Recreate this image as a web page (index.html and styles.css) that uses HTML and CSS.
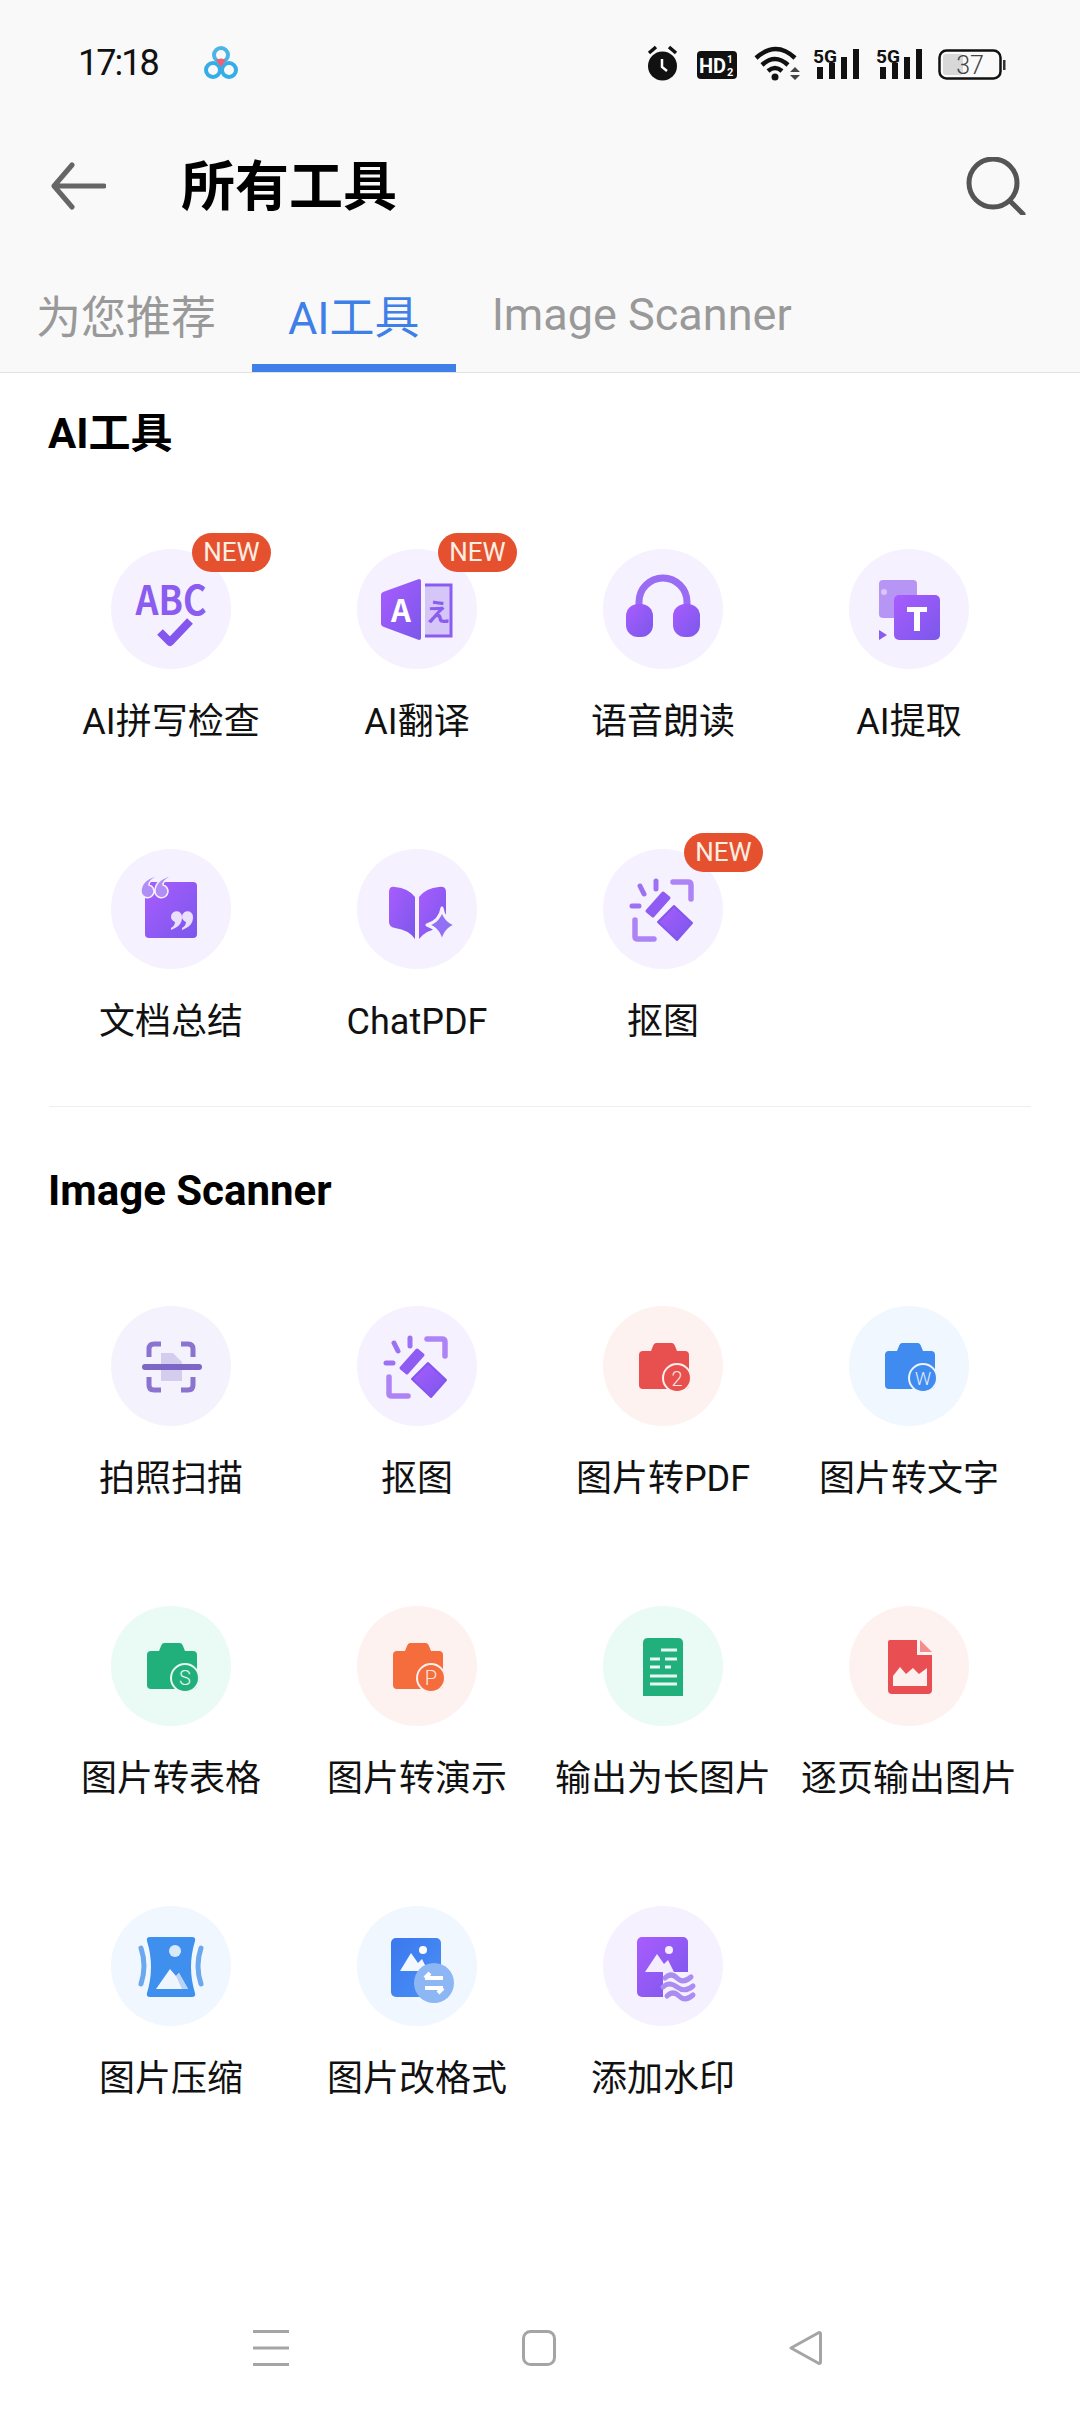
FILE: index.html
```html
<!DOCTYPE html>
<html lang="zh-CN">
<head>
  <meta charset="UTF-8" />
  <meta name="viewport" content="width=device-width, initial-scale=1.0" />
  <title>所有工具</title>
  <link rel="stylesheet" href="styles.css">
</head>
<body>
  <!-- shared gradients and repeated icons -->
  <svg class="sprite" aria-hidden="true">
    <defs>
      <linearGradient id="pu" x1="0" y1="0" x2="1" y2="1"><stop offset="0" stop-color="#a95cff"/><stop offset="1" stop-color="#7a58ea"/></linearGradient>
      <linearGradient id="bl" x1="0" y1="0" x2="1" y2="1"><stop offset="0" stop-color="#3b78ee"/><stop offset="1" stop-color="#4a90f6"/></linearGradient>
      <symbol id="eraser" viewBox="0 0 120 120">
        <path d="M70 33h15q3 0 3 3v14M32 71v17q0 2 3 2h16" fill="none" stroke="#ad84f5" stroke-width="5.500" stroke-linecap="round"/>
        <path d="M37 37l4 8M53 32v8M29 57h7" fill="none" stroke="#9c72f3" stroke-width="5" stroke-linecap="round"/>
        <path d="M60 44l6 5-16 18-6-5z" fill="#8e5cf2" stroke="#8e5cf2" stroke-width="3" stroke-linejoin="round"/>
        <path d="M71 57l18 17-15 17-19-18z" fill="url(#pu)" stroke="#8356ee" stroke-width="2" stroke-linejoin="round"/>
      </symbol>
      <symbol id="camera" viewBox="0 0 120 120">
        <path d="M53 37h16q2 0 3 3l2 5h8q4 0 4 4v30q0 4-4 4H40q-4 0-4-4V49q0-4 4-4h8l2-5q1-3 3-3z" fill="currentColor"/>
      </symbol>
    </defs>
  </svg>

  <header class="top">
    <div class="status">
      <div class="status-left">
        <span class="time">17:18</span>
        <svg class="app-logo" width="38" height="36" viewBox="0 0 38 36">
          <circle cx="11" cy="25" r="7" fill="none" stroke="#35ade6" stroke-width="4"/>
          <circle cx="27" cy="25" r="7" fill="none" stroke="#35ade6" stroke-width="4"/>
          <circle cx="19" cy="10" r="7" fill="none" stroke="#4cb5e6" stroke-width="4"/>
          <path d="M14 15l5 7 5-7q-5-3-10 0z" fill="#ee5f78"/>
        </svg>
      </div>
      <svg class="status-icons" width="370" height="40" viewBox="640 43 370 40">
        <circle cx="662.5" cy="66" r="14.5" fill="#111"/>
        <path d="M649 53l7-6M676 53l-7-6" stroke="#111" stroke-width="3.5"/>
        <path d="M662 59v8l5 4" fill="none" stroke="#fff" stroke-width="2.5"/>
        <rect x="697" y="51" width="40" height="28" rx="4" fill="#111"/>
        <text class="st-bold" x="699" y="73" font-size="20" fill="#fff">HD</text>
        <text class="st-bold" x="727" y="63" font-size="10" fill="#fff">1</text>
        <text class="st-bold" x="727" y="76" font-size="11" fill="#fff">2</text>
        <path d="M756 58q20-18 39 0M762 65q13-12 26 0M768 71q7-6 14 0" fill="none" stroke="#111" stroke-width="4.5"/>
        <circle cx="775" cy="77" r="3.5" fill="#111"/>
        <path d="M795 67l5 5h-10zM795 80l-5-5h10z" fill="#444"/>
        <g id="sig">
          <text class="st-bold" x="813" y="63" font-size="19" fill="#111" textLength="24" lengthAdjust="spacingAndGlyphs">5G</text>
          <rect x="817" y="67" width="6" height="12" fill="#111"/>
          <rect x="829" y="63" width="6" height="16" fill="#111"/>
          <rect x="841" y="57" width="6" height="22" fill="#111"/>
          <rect x="853" y="49" width="6" height="30" fill="#111"/>
        </g>
        <use href="#sig" x="63"/>
        <rect x="939.5" y="50.5" width="61" height="28" rx="7" fill="none" stroke="#111" stroke-width="2.5"/>
        <rect x="943" y="54" width="20" height="21" rx="3" fill="#d8d8d8"/>
        <text class="st-light" x="970" y="74" font-size="25" fill="#444" text-anchor="middle">37</text>
        <rect x="1003" y="60" width="2.5" height="10" fill="#333"/>
      </svg>
    </div>

    <div class="toolbar">
      <div class="toolbar-left">
        <svg width="56" height="48" viewBox="0 0 56 48"><path d="M22 3L4 24l18 21M4 24h50" fill="none" stroke="#666" stroke-width="5" stroke-linecap="round" stroke-linejoin="round"/></svg>
        <h1>所有工具</h1>
      </div>
      <svg width="60" height="58" viewBox="0 0 60 58"><circle cx="27" cy="26" r="24" fill="none" stroke="#555" stroke-width="5"/><path d="M44 44l13 13" stroke="#555" stroke-width="5" stroke-linecap="round"/></svg>
    </div>

    <nav class="tabs">
      <a class="tab">为您推荐</a>
      <a class="tab active">AI工具</a>
      <a class="tab">Image Scanner</a>
    </nav>
  </header>

  <main class="content">
    <section class="group">
      <h2>AI工具</h2>
      <div class="tool-grid">
        <div class="tool">
          <div class="icon purple">
            <span class="new">NEW</span>
            <svg viewBox="0 0 120 120">
              <text class="glyph" x="60" y="66" font-size="40" text-anchor="middle" fill="#8a5cf0" textLength="71" lengthAdjust="spacingAndGlyphs">ABC</text>
              <path d="M49 83l10 10 20-21" fill="none" stroke="#8356ee" stroke-width="8" stroke-linejoin="round"/>
            </svg>
          </div>
          <span class="label">AI拼写检查</span>
        </div>
        <div class="tool">
          <div class="icon purple">
            <span class="new">NEW</span>
            <svg viewBox="0 0 120 120">
              <path d="M68 36h26v51H68" fill="#d6c6f8" stroke="#8a5cf0" stroke-width="3"/>
              <path d="M24 46q0-2 2-3l36-13q2 0 2 2v57q0 2-2 2L27 78q-3-1-3-3z" fill="url(#pu)"/>
              <text class="glyph" x="44" y="73" font-size="31" text-anchor="middle" fill="#fff">A</text>
              <text class="glyph" x="81" y="72" font-size="25" text-anchor="middle" fill="#8a5cf0">え</text>
            </svg>
          </div>
          <span class="label">AI翻译</span>
        </div>
        <div class="tool">
          <div class="icon purple">
            <svg viewBox="0 0 120 120">
              <path d="M36 62V53a24 24 0 0 1 48 0v9" fill="none" stroke="#9a6cf3" stroke-width="7"/>
              <rect x="23" y="55" width="27" height="33" rx="12" fill="url(#pu)"/>
              <rect x="70" y="55" width="27" height="33" rx="12" fill="url(#pu)"/>
            </svg>
          </div>
          <span class="label">语音朗读</span>
        </div>
        <div class="tool">
          <div class="icon purple">
            <svg viewBox="0 0 120 120">
              <rect x="30" y="31" width="38" height="38" rx="4" fill="#b795f5"/>
              <circle cx="35" cy="43" r="3" fill="#d8c8fa"/>
              <path d="M30 81l8 5-8 5z" fill="#8a5cf0"/>
              <rect x="45" y="46" width="46" height="45" rx="5" fill="url(#pu)"/>
              <path d="M58 58h20v5h-7v19h-6V63h-7z" fill="#fff"/>
            </svg>
          </div>
          <span class="label">AI提取</span>
        </div>
        <div class="tool">
          <div class="icon purple">
            <svg viewBox="0 0 120 120">
              <rect x="34" y="33" width="52" height="56" rx="4" fill="url(#pu)"/>
              <path d="M44 27C35 30 30 35 30 42A6.500 6.500 0 1 0 38 36C38 33 41 30 44 29zM58 27C49 30 44 35 44 42A6.500 6.500 0 1 0 52 36C52 33 55 30 58 29z" fill="#b18df6" stroke="#f6f1fe" stroke-width="1.500"/>
              <path d="M60 81C68 78 71 74 71 68A5.500 5.500 0 1 0 64 73C64 76 62 78 60 79zM71 81C79 78 82 74 82 68A5.500 5.500 0 1 0 75 73C75 76 73 78 71 79z" fill="#eadffd"/>
            </svg>
          </div>
          <span class="label">文档总结</span>
        </div>
        <div class="tool">
          <div class="icon purple">
            <svg viewBox="0 0 120 120">
              <path d="M32 43q0-6 6-5 13 1 20 10v42q-6-9-20-11-6-1-6-6z" fill="url(#pu)"/>
              <path d="M62 48q7-9 20-10 7-1 7 5v32q0 3-6 4-14 2-21 11z" fill="url(#pu)"/>
              <path d="M85 59q2 13 15 17-13 4-15 19-2-15-15-19 13-4 15-17z" fill="#9270f4" stroke="#f6f1fe" stroke-width="3" stroke-linejoin="round"/>
            </svg>
          </div>
          <span class="label">ChatPDF</span>
        </div>
        <div class="tool">
          <div class="icon purple">
            <span class="new">NEW</span>
            <svg viewBox="0 0 120 120"><use href="#eraser"/></svg>
          </div>
          <span class="label">抠图</span>
        </div>
      </div>
    </section>

    <hr class="divider">

    <section class="group">
      <h2>Image Scanner</h2>
      <div class="tool-grid">
        <div class="tool">
          <div class="icon lilac">
            <svg viewBox="0 0 120 120">
              <path d="M50 47l12 0 9 9v19H50z" fill="#d5cdee"/>
              <path d="M50 38H43q-5 0-5 5v8M70 38h7q5 0 5 5v8M38 71v8q0 5 5 5h7M82 71v8q0 5-5 5h-7" fill="none" stroke="#8a74d0" stroke-width="5"/>
              <path d="M34 61h54" stroke="#7d67c6" stroke-width="6" stroke-linecap="round"/>
            </svg>
          </div>
          <span class="label">拍照扫描</span>
        </div>
        <div class="tool">
          <div class="icon purple">
            <svg viewBox="0 0 120 120"><use href="#eraser"/></svg>
          </div>
          <span class="label">抠图</span>
        </div>
        <div class="tool">
          <div class="icon red">
            <svg viewBox="0 0 120 120" class="cam-red">
              <use href="#camera"/>
              <circle cx="74" cy="72" r="14" fill="#e8504f" stroke="#fdf0ee" stroke-width="2"/>
              <text class="glyph-thin" x="74" y="80" font-size="20" text-anchor="middle" fill="#fde3df">2</text>
            </svg>
          </div>
          <span class="label">图片转PDF</span>
        </div>
        <div class="tool">
          <div class="icon blue">
            <svg viewBox="0 0 120 120" class="cam-blue">
              <use href="#camera"/>
              <circle cx="74" cy="72" r="14" fill="#3f8bef" stroke="#eef5fd" stroke-width="2"/>
              <text class="glyph-thin" x="74" y="79" font-size="18" text-anchor="middle" fill="#e6f0fd">W</text>
            </svg>
          </div>
          <span class="label">图片转文字</span>
        </div>
        <div class="tool">
          <div class="icon green">
            <svg viewBox="0 0 120 120" class="cam-green">
              <use href="#camera"/>
              <circle cx="74" cy="72" r="14" fill="#21b07c" stroke="#e8f8f2" stroke-width="2"/>
              <text class="glyph-thin" x="74" y="79" font-size="20" text-anchor="middle" fill="#e6f8f0">S</text>
            </svg>
          </div>
          <span class="label">图片转表格</span>
        </div>
        <div class="tool">
          <div class="icon red">
            <svg viewBox="0 0 120 120" class="cam-orange">
              <use href="#camera"/>
              <circle cx="74" cy="72" r="14" fill="#f56c3d" stroke="#fdf0ee" stroke-width="2"/>
              <text class="glyph-thin" x="74" y="79" font-size="20" text-anchor="middle" fill="#fde8df">P</text>
            </svg>
          </div>
          <span class="label">图片转演示</span>
        </div>
        <div class="tool">
          <div class="icon green">
            <svg viewBox="0 0 120 120">
              <path d="M45 32h30q5 0 5 5v53H40V37q0-5 5-5z" fill="#21b07c"/>
              <path d="M58 44h16M47 53h10M62 53h12M47 61h10M62 61h6M47 70h27M47 78h27" stroke="#e8f8f2" stroke-width="3"/>
            </svg>
          </div>
          <span class="label">输出为长图片</span>
        </div>
        <div class="tool">
          <div class="icon red">
            <svg viewBox="0 0 120 120">
              <path d="M41 34h27v15h15v35q0 4-4 4H43q-4 0-4-4V36q0-2 2-2z" fill="#e94f52"/>
              <path d="M71 34l12 12H71z" fill="#f48d8d"/>
              <path d="M44 80V70l7-9 6 7 7-6 6 6 8-6v18z" fill="#fdf0ee"/>
            </svg>
          </div>
          <span class="label">逐页输出图片</span>
        </div>
        <div class="tool">
          <div class="icon blue">
            <svg viewBox="0 0 120 120">
              <path d="M39 31h42q4 0 3 4-8 26 0 52 1 4-3 4H39q-4 0-3-4 8-26 0-52-1-4 3-4z" fill="#3f8fef"/>
              <circle cx="64" cy="45" r="6" fill="#d8e9fc"/>
              <path d="M45 83l14-20 6 7 3-3 9 16z" fill="#eef5fd"/>
              <path d="M65 70l3-3 9 16h-6z" fill="#b9d3f6"/>
              <path d="M30 42q6 18 0 36M90 42q-6 18 0 36" fill="none" stroke="#6ba8ee" stroke-width="5" stroke-linecap="round"/>
            </svg>
          </div>
          <span class="label">图片压缩</span>
        </div>
        <div class="tool">
          <div class="icon blue">
            <svg viewBox="0 0 120 120">
              <rect x="34" y="32" width="50" height="59" rx="5" fill="url(#bl)"/>
              <circle cx="66" cy="44" r="4" fill="#fff"/>
              <path d="M43 65l11-18 7 10 4-4 6 12z" fill="#f3f7fe"/>
              <circle cx="77" cy="77" r="20" fill="#8db6f5"/>
              <path d="M68 72h18M68 72l5-5M86 82H68M86 82l-5 5" fill="none" stroke="#fff" stroke-width="4"/>
            </svg>
          </div>
          <span class="label">图片改格式</span>
        </div>
        <div class="tool">
          <div class="icon purple">
            <svg viewBox="0 0 120 120">
              <rect x="34" y="31" width="51" height="60" rx="5" fill="url(#pu)"/>
              <circle cx="66" cy="44" r="4" fill="#f3edff"/>
              <path d="M42 66l12-18 7 10 4-4 6 12z" fill="#f3edff"/>
              <path d="M60 66h33v28H60z" fill="#f6f1fe"/>
              <path d="M62 72q6-6 12 0t14-1M60 81q6-6 14 0t16-1M64 90q6-6 12 0t14-1" fill="none" stroke="#ab8cf2" stroke-width="5" stroke-linecap="round"/>
            </svg>
          </div>
          <span class="label">添加水印</span>
        </div>
      </div>
    </section>
  </main>

  <footer class="navbar">
    <svg width="36" height="36" viewBox="0 0 36 36"><path d="M0 1.500h36M0 18h36M0 34.500h36" stroke="#a5a5a5" stroke-width="3"/></svg>
    <svg width="34" height="36" viewBox="0 0 34 36"><rect x="1.500" y="1.500" width="31" height="33" rx="7" fill="none" stroke="#a5a5a5" stroke-width="3"/></svg>
    <svg width="34" height="36" viewBox="0 0 34 36"><path d="M31 2.500L3 18l28 15.500q1.500 0 1.500-1.500V4q0-1.500-1.500-1.500z" fill="none" stroke="#a5a5a5" stroke-width="3" stroke-linejoin="round"/></svg>
  </footer>
</body>
</html>
```

FILE: styles.css
```css
:root {
  --head-bg: #f9f9f9;
  --line: #e3e3e3;
  --blue: #3f7fe8;
  --grey-tab: #999;
  --ink: #111;
}
* { box-sizing: border-box; margin: 0; padding: 0; }
html, body { height: 100%; }
body {
  width: 1080px;
  height: 2414px;
  display: flex;
  flex-direction: column;
  font-family: Roboto, "Noto Sans CJK SC", sans-serif;
  background: #fff;
  color: var(--ink);
}
.sprite { display: block; width: 0; height: 0; }

.top { background: var(--head-bg); border-bottom: 1px solid var(--line); }
.status { height: 126px; display: flex; align-items: center; justify-content: space-between; padding: 0 70px 0 78px; }
.status-left { display: flex; align-items: center; gap: 43px; }
.time { font-family: Roboto, sans-serif; font-size: 36px; letter-spacing: -2px; width: 81px; }
.st-bold { font-family: Roboto, sans-serif; font-weight: 700; }
.st-light { font-family: Roboto, sans-serif; font-weight: 300; }

.toolbar { height: 120px; display: flex; align-items: center; justify-content: space-between; padding: 0 54px 0 50px; }
.toolbar-left { display: flex; align-items: center; gap: 75px; }
.toolbar h1 { font-size: 54px; font-weight: 700; color: #000; line-height: 1; margin-top: 3px; }

.tabs { height: 126px; display: flex; }
.tab {
  display: flex;
  align-items: center;
  padding: 19px 36px 0;
  font-size: 45px;
  color: var(--grey-tab);
  border-bottom: 8px solid transparent;
}
.tab.active { color: var(--blue); border-bottom-color: var(--blue); }

.content { flex: 1; }
.group { padding: 29px 48px 61px; }
.group h2 { height: 60px; line-height: 63px; font-size: 42px; font-weight: 700; margin-bottom: 87px; color: #000; }
.group:last-child { padding-top: 52px; padding-bottom: 0; }
.divider { border: none; border-top: 1px solid #eee; margin: 0 49px; }

.tool-grid { display: grid; grid-template-columns: repeat(4, 246px); row-gap: 104px; }
.tool { display: flex; flex-direction: column; align-items: center; gap: 28px; height: 196px; }
.label { font-size: 36px; line-height: 50px; white-space: nowrap; }

.icon { position: relative; width: 120px; height: 120px; border-radius: 50%; }
.icon svg { display: block; width: 120px; height: 120px; }
.icon.purple { background: #f6f1fe; }
.icon.lilac { background: #f4f2fc; }
.icon.red { background: #fef2f0; }
.icon.blue { background: #f1f7fe; }
.icon.green { background: #eafaf4; }
.cam-red { color: #e8504f; }
.cam-blue { color: #3f8bef; }
.cam-green { color: #21b07c; }
.cam-orange { color: #f56c3d; }
.glyph { font-family: "Noto Sans CJK SC", sans-serif; font-weight: 700; }
.glyph-thin { font-family: Roboto, sans-serif; font-weight: 300; }

.new {
  position: absolute;
  top: -16px;
  left: 81px;
  width: 79px;
  height: 39px;
  border-radius: 20px;
  background: #e5512f;
  color: #fdeee2;
  font-family: Roboto, sans-serif;
  font-size: 26px;
  line-height: 39px;
  text-align: center;
}

.navbar { height: 136px; flex-shrink: 0; display: flex; align-items: center; justify-content: space-between; padding: 4px 258px 0 253px; }
```
